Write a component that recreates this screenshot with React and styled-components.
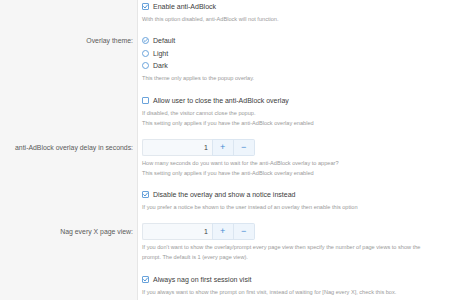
import React from "react";
import styled, { createGlobalStyle } from "styled-components";

const GlobalStyle = createGlobalStyle`
  html, body {
    margin: 0;
    padding: 0;
    background: #ffffff;
    font-family: "Liberation Sans", Arial, sans-serif;
  }
`;

const rows = [
  {
    id: 1,
    label: "",
    first: true,
    checks: [{ text: "Enable anti-AdBlock", on: true }],
    desc: ["With this option disabled, anti-AdBlock will not function."],
  },
  {
    id: 2,
    label: "Overlay theme:",
    radios: [
      { text: "Default", on: true },
      { text: "Light", on: false },
      { text: "Dark", on: false },
    ],
    desc: ["This theme only applies to the popup overlay."],
  },
  {
    id: 3,
    label: "",
    checks: [{ text: "Allow user to close the anti-AdBlock overlay", on: false }],
    desc: [
      "If disabled, the visitor cannot close the popup.",
      "This setting only applies if you have the anti-AdBlock overlay enabled",
    ],
  },
  {
    id: 4,
    label: "anti-AdBlock overlay delay in seconds:",
    number: 1,
    desc: [
      "How many seconds do you want to wait for the anti-AdBlock overlay to appear?",
      "This setting only applies if you have the anti-AdBlock overlay enabled",
    ],
  },
  {
    id: 5,
    label: "",
    checks: [{ text: "Disable the overlay and show a notice instead", on: true }],
    desc: ["If you prefer a notice be shown to the user instead of an overlay then enable this option"],
  },
  {
    id: 6,
    label: "Nag every X page view:",
    number: 1,
    desc: [
      "If you don't want to show the overlay/prompt every page view then specify the number of page views to show the",
      "prompt. The default is 1 (every page view).",
    ],
  },
  {
    id: 7,
    label: "",
    checks: [{ text: "Always nag on first session visit", on: true }],
    desc: ["If you always want to show the prompt on first visit, instead of waiting for [Nag every X], check this box."],
  },
];

const CheckBox = ({ on }) => (
  <Box>
    {on && (
      <svg width="7" height="7" viewBox="0 0 7 7">
        <polyline
          points="1.6,3.6 3,5 5.5,2"
          fill="none"
          stroke="#3f8ad2"
          strokeWidth="0.9"
          strokeLinecap="round"
          strokeLinejoin="round"
        />
      </svg>
    )}
  </Box>
);

const Radio = ({ on }) => (
  <Circle>
    {on && (
      <svg width="7" height="7" viewBox="0 0 7 7">
        <polyline
          points="2,3.6 3.1,4.6 5,2.5"
          fill="none"
          stroke="#3f8ad2"
          strokeWidth="0.8"
          strokeLinecap="round"
          strokeLinejoin="round"
        />
      </svg>
    )}
  </Circle>
);

const App = () => {
  return (
    <>
      <GlobalStyle />
      <Form>
        {rows.map((row) => (
          <Row key={row.id}>
            <Label first={row.first} tall={row.number !== undefined}>
              {row.label}
            </Label>
            <Field first={row.first}>
              {row.checks?.map((c) => (
                <Option key={c.text}>
                  <CheckBox on={c.on} />
                  {c.text}
                </Option>
              ))}
              {row.radios?.map((r) => (
                <Option key={r.text}>
                  <Radio on={r.on} />
                  {r.text}
                </Option>
              ))}
              {row.number !== undefined && (
                <Spinner>
                  <NumberInput>{row.number}</NumberInput>
                  <StepButton>+</StepButton>
                  <StepButton>−</StepButton>
                </Spinner>
              )}
              <Desc>
                {row.desc.map((d) => (
                  <div key={d}>{d}</div>
                ))}
              </Desc>
            </Field>
          </Row>
        ))}
      </Form>
    </>
  );
};
export default App;

const Form = styled.div`
  width: 456px;
  height: 300px;
  overflow: hidden;
  background: #ffffff;
`;

const Row = styled.div`
  display: grid;
  grid-template-columns: 138px 1fr;
`;

const Label = styled.div`
  background: #f6f6f6;
  border-right: 1px solid #e6e6e6;
  padding: ${(p) => (p.first ? "0" : "5.5px")} 4px 5.5px 0;
  text-align: right;
  font-size: 6.9px;
  line-height: ${(p) => (p.tall ? "17px" : "12.5px")};
  color: #5a5a5a;
  white-space: nowrap;
`;

const Field = styled.div`
  padding: ${(p) => (p.first ? "0" : "5.5px")} 0 5.5px 4px;
  min-width: 0;
`;

const Option = styled.div`
  display: flex;
  align-items: center;
  gap: 4px;
  height: 12.5px;
  font-size: 7px;
  color: #3c3c3c;
  white-space: nowrap;
`;

const Box = styled.span`
  width: 7px;
  height: 7px;
  box-sizing: border-box;
  border: 1px solid #6aa3db;
  border-radius: 1px;
  display: flex;
  align-items: center;
  justify-content: center;
  flex-shrink: 0;

  svg {
    margin: -1px;
  }
`;

const Circle = styled(Box)`
  border-radius: 50%;
`;

const Spinner = styled.div`
  display: flex;
  height: 17px;
  width: 113px;
`;

const NumberInput = styled.div`
  width: 70px;
  box-sizing: border-box;
  border: 1px solid #e2e8ee;
  border-right: none;
  background: #f6f9fc;
  border-radius: 2px 0 0 2px;
  font-size: 7px;
  color: #3c3c3c;
  text-align: right;
  padding-right: 4px;
  line-height: 15px;
`;

const StepButton = styled.div`
  width: 21.5px;
  box-sizing: border-box;
  border: 1px solid #dbe6f1;
  background: #eef5fc;
  color: #3f8ad2;
  font-size: 9px;
  line-height: 15px;
  text-align: center;

  & + & {
    border-left: none;
    border-radius: 0 2px 2px 0;
  }
`;

const Desc = styled.div`
  margin-top: 1px;
  font-size: 5.6px;
  line-height: 10px;
  color: #9a9a9a;
  white-space: nowrap;

  ${Spinner} + & {
    margin-top: 2px;
  }
`;
